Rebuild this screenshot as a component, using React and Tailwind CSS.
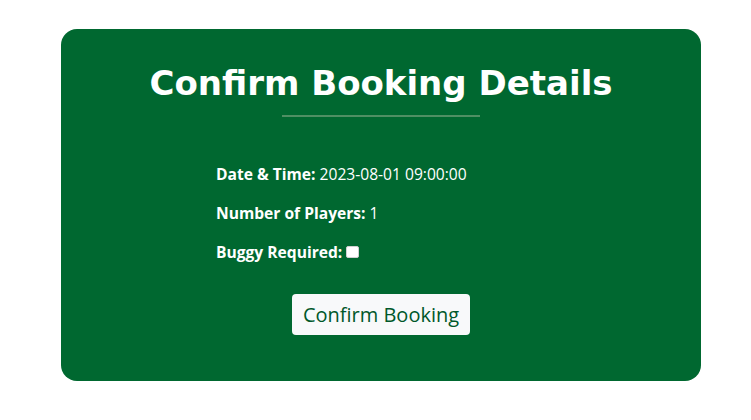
export default function App() {
  return (
    <main className="min-h-screen bg-white pt-[29px] pl-[61px]" style={{ fontFamily: '"Open Sans", sans-serif' }}>
      <div className="w-[640px] h-[352px] bg-[#006830] rounded-[16px] text-white pt-[26px]">
        <h1
          className="text-center text-[34px] font-bold leading-[56px]"
          style={{ fontFamily: '"DejaVu Sans", sans-serif' }}
        >
          Confirm Booking Details
        </h1>
        <div className="mx-auto mt-[4px] w-[198px] h-[2px] bg-[#4f8f63]" />

        <div className="pl-[155px] mt-[46px] text-[15.6px] space-y-[17px]">
          <p className="leading-[22px]">
            <span className="font-bold">Date &amp; Time:</span> 2023-08-01 09:00:00
          </p>
          <p className="leading-[22px]">
            <span className="font-bold">Number of Players:</span> 1
          </p>
          <p className="leading-[22px] flex items-center gap-[4px]">
            <span className="font-bold">Buggy Required:</span>
            <span className="inline-block w-[13px] h-[12px] bg-white border border-[#d0d0d0] rounded-[2px]" />
          </p>
        </div>

        <div className="flex justify-center mt-[31px]">
          <button className="bg-[#f8f9fa] text-[#00582a] text-[20px] leading-[29px] px-[11px] py-[6px] rounded-[4px]">
            Confirm Booking
          </button>
        </div>
      </div>
    </main>
  );
}
